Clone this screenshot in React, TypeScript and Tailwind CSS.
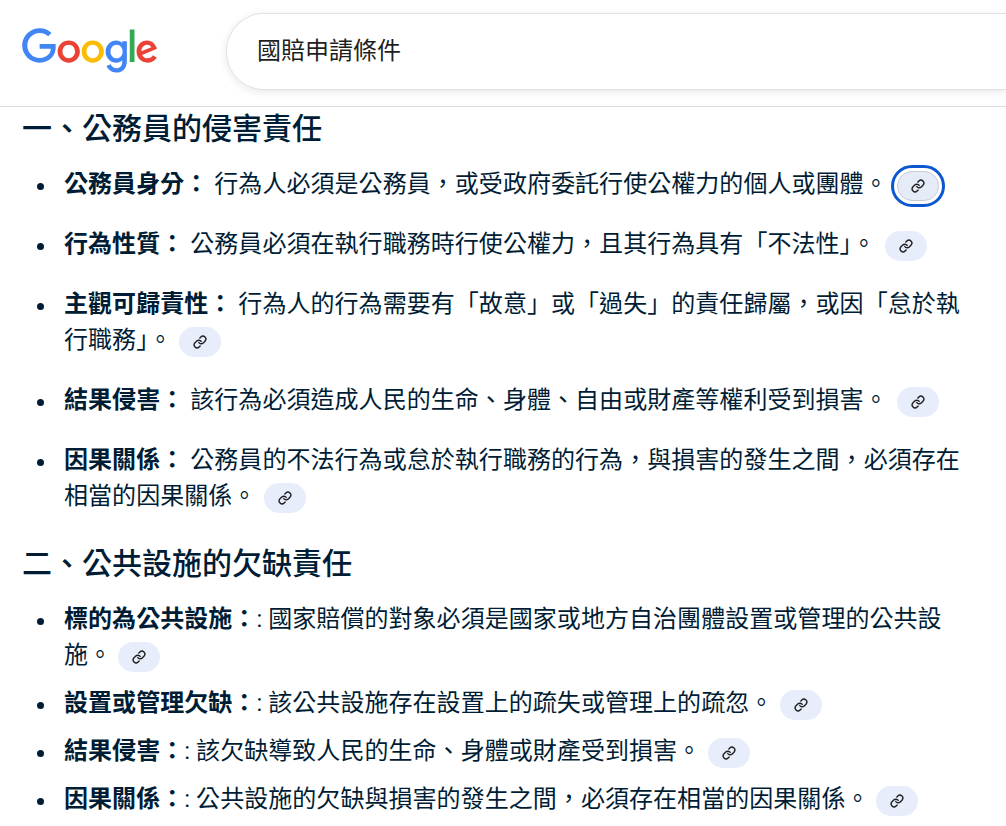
import React from 'react';
import { Link } from 'lucide-react';

interface Item {
    title: string;
    body: string;
    chipGap: string;
    focused?: boolean;
}

const dutyItems: Item[] = [
    { title: '公務員身分：', body: ' 行為人必須是公務員，或受政府委託行使公權力的個人或團體。', chipGap: 'ml-[9px]', focused: true },
    { title: '行為性質：', body: ' 公務員必須在執行職務時行使公權力，且其行為具有「不法性」。', chipGap: 'ml-[9px]' },
    { title: '主觀可歸責性：', body: ' 行為人的行為需要有「故意」或「過失」的責任歸屬，或因「怠於執行職務」。', chipGap: 'ml-[7px]' },
    { title: '結果侵害：', body: ' 該行為必須造成人民的生命、身體、自由或財產等權利受到損害。', chipGap: 'ml-[9px]' },
    { title: '因果關係：', body: ' 公務員的不法行為或怠於執行職務的行為，與損害的發生之間，必須存在相當的因果關係。', chipGap: 'ml-[8px]' },
];

const facilityItems: Item[] = [
    { title: '標的為公共設施：', body: ': 國家賠償的對象必須是國家或地方自治團體設置或管理的公共設施。', chipGap: 'ml-[6px]' },
    { title: '設置或管理欠缺：', body: ': 該公共設施存在設置上的疏失或管理上的疏忽。', chipGap: 'ml-[7px]' },
    { title: '結果侵害：', body: ': 該欠缺導致人民的生命、身體或財產受到損害。', chipGap: 'ml-[7px]' },
    { title: '因果關係：', body: ': 公共設施的欠缺與損害的發生之間，必須存在相當的因果關係。', chipGap: 'ml-[6px]' },
];

const GoogleLogo = () => (
    <svg viewBox="0 0 272 92" className="w-[136px] h-[46px] shrink-0">
        <path fill="#EA4335" d="M115.75 47.18c0 12.77-9.99 22.18-22.25 22.18s-22.25-9.41-22.25-22.18C71.25 34.32 81.24 25 93.5 25s22.25 9.32 22.25 22.18zm-9.74 0c0-7.98-5.79-13.44-12.51-13.44S80.99 39.2 80.99 47.18c0 7.9 5.79 13.44 12.51 13.44s12.51-5.55 12.51-13.44z" />
        <path fill="#FBBC05" d="M163.75 47.18c0 12.77-9.99 22.18-22.25 22.18s-22.25-9.41-22.25-22.18c0-12.85 9.99-22.18 22.25-22.18s22.25 9.32 22.25 22.18zm-9.74 0c0-7.98-5.79-13.44-12.51-13.44s-12.51 5.46-12.51 13.44c0 7.9 5.79 13.44 12.51 13.44s12.51-5.55 12.51-13.44z" />
        <path fill="#4285F4" d="M209.75 26.34v39.82c0 16.38-9.66 23.07-21.08 23.07-10.75 0-17.22-7.19-19.66-13.07l8.48-3.53c1.51 3.61 5.21 7.87 11.17 7.87 7.31 0 11.84-4.51 11.84-13v-3.19h-.34c-2.18 2.69-6.38 5.04-11.68 5.04-11.09 0-21.25-9.66-21.25-22.09 0-12.52 10.16-22.26 21.25-22.26 5.29 0 9.49 2.35 11.68 4.96h.34v-3.61h9.25zm-8.56 20.92c0-7.81-5.21-13.52-11.84-13.52-6.72 0-12.35 5.71-12.35 13.52 0 7.73 5.63 13.36 12.35 13.36 6.63 0 11.84-5.63 11.84-13.36z" />
        <path fill="#34A853" d="M225 3v65h-9.5V3h9.5z" />
        <path fill="#EA4335" d="M262.02 54.48l7.56 5.04c-2.44 3.61-8.32 9.83-18.48 9.83-12.6 0-22.01-9.74-22.01-22.18 0-13.19 9.49-22.18 20.92-22.18 11.51 0 17.14 9.16 18.98 14.11l1.01 2.52-29.65 12.28c2.27 4.45 5.8 6.72 10.75 6.72 4.96 0 8.4-2.44 10.92-6.14zm-23.27-7.98l19.82-8.23c-1.09-2.77-4.37-4.7-8.23-4.7-4.95 0-11.84 4.37-11.59 12.93z" />
        <path fill="#4285F4" d="M35.29 41.41V32H67c.31 1.64.47 3.58.47 5.68 0 7.06-1.93 15.79-8.15 22.01-6.05 6.3-13.78 9.66-24.02 9.66C16.32 69.35.36 53.89.36 34.91.36 15.93 16.32.47 35.3.47c10.5 0 17.98 4.12 23.6 9.49l-6.64 6.64c-4.03-3.78-9.49-6.72-16.97-6.72-13.86 0-24.7 11.17-24.7 25.03 0 13.86 10.84 25.03 24.7 25.03 8.99 0 14.11-3.61 17.39-6.89 2.66-2.66 4.41-6.46 5.1-11.65l-22.49.01z" />
    </svg>
);

const LinkChip: React.FC<{ gap: string; focused?: boolean }> = ({ gap, focused }) => (
    <button
        className={
            focused
                ? `${gap} inline-flex items-center justify-center align-middle w-[42px] h-[30px] rounded-full bg-[#e6ebf8] border border-[#c9ccd4] outline-[3px] outline-offset-[3px] outline-[#0b57d0]`
                : `${gap} inline-flex items-center justify-center align-middle w-[42px] h-[30px] rounded-full bg-[#e8edfc]`
        }
    >
        <Link className="h-[14px] w-[14px] text-[#1f1f1f]" strokeWidth={2.4} />
    </button>
);

const ItemList: React.FC<{ items: Item[]; tight?: boolean }> = ({ items, tight }) => (
    <ul className={tight ? 'pl-[64px] pr-[40px] mt-[15px] space-y-[12px]' : 'pl-[64px] pr-[40px] mt-[15px] space-y-[24px]'}>
        {items.map((item) => (
            <li
                key={item.title}
                className="relative leading-[36px] tracking-[0.05px] before:content-[''] before:absolute before:left-[-27px] before:top-[17px] before:w-[7px] before:h-[7px] before:rounded-full before:bg-[#001d35]"
            >
                <strong className="font-bold">{item.title}</strong>
                {item.body}
                <LinkChip gap={item.chipGap} focused={item.focused} />
            </li>
        ))}
    </ul>
);

export default function App() {
    return (
        <div className="w-[1006px] h-[826px] overflow-hidden bg-white text-[#001d35] text-[24px] font-['Roboto','Noto_Sans_CJK_TC',sans-serif]">
            <header className="h-[107px] flex items-center border-b border-[#dadce0] pl-[22px] pb-[4px]">
                <GoogleLogo />
                <div className="ml-[68px] flex-1 h-[77px] flex items-center pl-[30px] rounded-l-[38px] border border-r-0 border-[#dfe1e5] shadow-[0_2px_8px_rgba(32,33,36,0.1)] text-[#1f1f1f]">
                    國賠申請條件
                </div>
            </header>
            <main>
                <h2 className="text-[30px] leading-[44px] pl-[22px] font-medium">一、公務員的侵害責任</h2>
                <ItemList items={dutyItems} />
                <h2 className="text-[30px] leading-[44px] pl-[22px] font-medium mt-[28px]">二、公共設施的欠缺責任</h2>
                <ItemList items={facilityItems} tight />
            </main>
        </div>
    );
}
